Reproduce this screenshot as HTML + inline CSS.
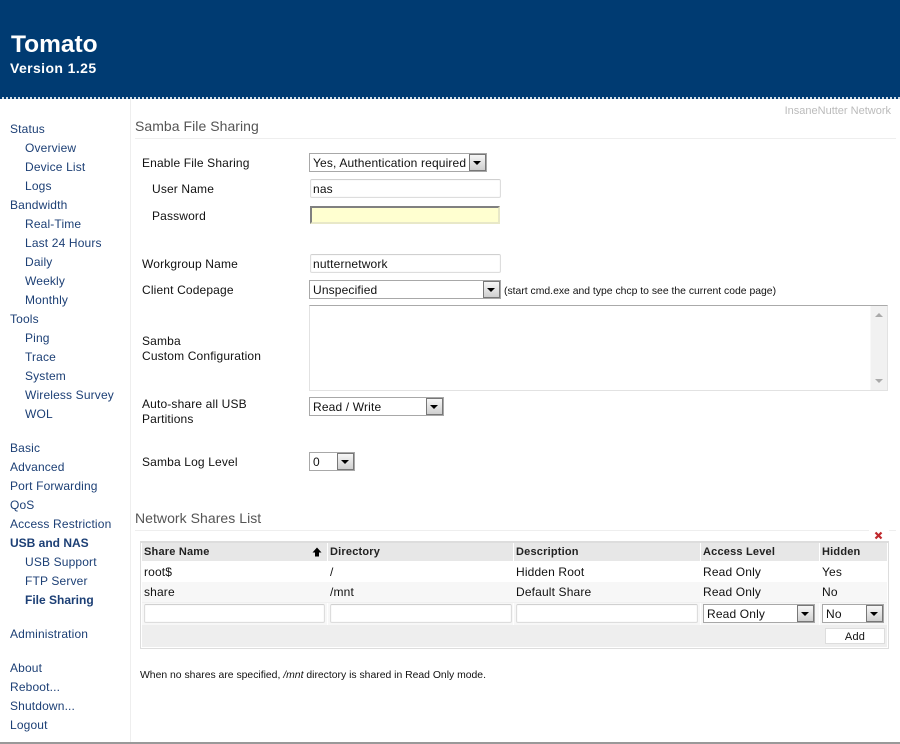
<!DOCTYPE html>
<html><head><meta charset="utf-8"><title>Tomato</title>
<style>
html,body{margin:0;padding:0;background:#fff;width:900px;height:744px;overflow:hidden}
body{position:relative;font-family:"Liberation Sans",Arial,sans-serif;font-size:12px;letter-spacing:.15px;color:#111}
.a{position:absolute;white-space:nowrap;letter-spacing:0}
.t{position:absolute;white-space:nowrap;line-height:16px;height:16px;margin-top:1px}
#hd{position:absolute;left:0;top:0;width:900px;height:97px;background:#003b72}
#dots{position:absolute;left:0;top:97px;width:900px;height:2px;background:repeating-linear-gradient(90deg,#003b72 0,#003b72 2px,#d5dfe8 2px,#d5dfe8 4px)}
.n{position:absolute;white-space:nowrap;line-height:16px;height:16px;color:#1c3f75;left:10px;margin-top:1px}
.s{left:25px}
.h{position:absolute;left:135px;width:761px;height:1px;background:#eee}
.ht{position:absolute;left:135px;font-size:14px;line-height:18px;color:#555;white-space:nowrap;letter-spacing:.05px}
.i{position:absolute;box-sizing:border-box;background:#fff;border:1px solid #ddd;border-top-color:#d0d0d0;border-radius:2px;line-height:16px;padding:1px 0 0 2px;color:#111;box-shadow:inset 0 0 0 1px #fafafa}
.sel{position:absolute;box-sizing:border-box;background:#fff;border:1px solid #a8a8a8;line-height:16px;padding:1px 0 0 3px;color:#111}
.sel b{position:absolute;right:0;top:0;bottom:0;width:17px;box-sizing:border-box;border:1px solid #777;background:linear-gradient(#f6f6f6,#cfcfcf)}
.sel b:after{content:"";position:absolute;left:3px;top:6px;border:4px solid transparent;border-top:4px solid #000;border-bottom:0}
.c{position:absolute;white-space:nowrap;line-height:16px;height:16px}
.hc{position:absolute;top:543px;height:18px;background:#e7e7e7;font-weight:bold;line-height:19px;font-size:11px;letter-spacing:.2px;padding-left:2px;box-sizing:border-box;color:#222}
</style></head><body>
<div id="hd"></div><div id="dots"></div>
<div class="a" style="left:11px;top:31px;font-size:24.5px;font-weight:bold;line-height:28px;color:#fff">Tomato</div>
<div class="a" style="left:10px;top:60px;font-size:14px;font-weight:bold;line-height:16px;letter-spacing:.4px;color:#fff">Version 1.25</div>
<div class="a" style="left:130px;top:99px;width:1px;height:643px;background:#eee"></div>
<div class="a" style="left:0;top:742px;width:900px;height:2px;background:#999"></div>

<div class="n" style="top:120px">Status</div>
<div class="n s" style="top:139px">Overview</div>
<div class="n s" style="top:158px">Device List</div>
<div class="n s" style="top:177px">Logs</div>
<div class="n" style="top:196px">Bandwidth</div>
<div class="n s" style="top:215px">Real-Time</div>
<div class="n s" style="top:234px">Last 24 Hours</div>
<div class="n s" style="top:253px">Daily</div>
<div class="n s" style="top:272px">Weekly</div>
<div class="n s" style="top:291px">Monthly</div>
<div class="n" style="top:310px">Tools</div>
<div class="n s" style="top:329px">Ping</div>
<div class="n s" style="top:348px">Trace</div>
<div class="n s" style="top:367px">System</div>
<div class="n s" style="top:386px">Wireless Survey</div>
<div class="n s" style="top:405px">WOL</div>
<div class="n" style="top:439px">Basic</div>
<div class="n" style="top:458px">Advanced</div>
<div class="n" style="top:477px">Port Forwarding</div>
<div class="n" style="top:496px">QoS</div>
<div class="n" style="top:515px">Access Restriction</div>
<div class="n" style="top:534px;font-weight:bold;letter-spacing:0">USB and NAS</div>
<div class="n s" style="top:553px">USB Support</div>
<div class="n s" style="top:572px">FTP Server</div>
<div class="n s" style="top:591px;font-weight:bold;letter-spacing:0">File Sharing</div>
<div class="n" style="top:625px">Administration</div>
<div class="n" style="top:659px">About</div>
<div class="n" style="top:678px">Reboot...</div>
<div class="n" style="top:697px">Shutdown...</div>
<div class="n" style="top:716px">Logout</div>

<div class="a" style="right:9px;top:104px;font-size:11px;line-height:14px;color:#bbb">InsaneNutter Network</div>

<div class="ht" style="top:117px">Samba File Sharing</div>
<div class="h" style="top:138px"></div>

<div class="t" style="left:142px;top:154px">Enable File Sharing</div>
<div class="t" style="left:152px;top:180px">User Name</div>
<div class="t" style="left:152px;top:207px">Password</div>
<div class="t" style="left:142px;top:255px">Workgroup Name</div>
<div class="t" style="left:142px;top:281px">Client Codepage</div>
<div class="t" style="left:142px;top:332px">Samba</div>
<div class="t" style="left:142px;top:347px">Custom Configuration</div>
<div class="t" style="left:142px;top:395px">Auto-share all USB</div>
<div class="t" style="left:142px;top:410px">Partitions</div>
<div class="t" style="left:142px;top:453px">Samba Log Level</div>

<div class="sel" style="left:309px;top:153px;width:178px;height:19px">Yes, Authentication required<b></b></div>
<div class="i" style="left:310px;top:179px;width:191px;height:19px">nas</div>
<div class="a" style="left:310px;top:206px;width:190px;height:18px;box-sizing:border-box;background:#ffffd0;border:2px solid #e8e8c8;border-top-color:#808080;border-left-color:#808080"></div>
<div class="i" style="left:310px;top:254px;width:191px;height:19px">nutternetwork</div>
<div class="sel" style="left:309px;top:280px;width:192px;height:19px">Unspecified<b></b></div>
<div class="a" style="left:504px;top:285px;font-size:10.4px;line-height:13px;color:#111">(start cmd.exe and type chcp to see the current code page)</div>

<div class="a" style="left:309px;top:305px;width:579px;height:86px;box-sizing:border-box;background:#fff;border:1px solid #e2e2e2;border-top:1px solid #aaa">
  <div class="a" style="right:0;top:0;bottom:0;width:16px;background:#f1f1f1;border-left:1px solid #f8f8f8"></div>
  <div class="a" style="right:4px;top:7px;border:4px solid transparent;border-bottom:4px solid #aaa;border-top:0"></div>
  <div class="a" style="right:4px;bottom:7px;border:4px solid transparent;border-top:4px solid #aaa;border-bottom:0"></div>
</div>

<div class="sel" style="left:309px;top:397px;width:135px;height:19px">Read / Write<b></b></div>
<div class="sel" style="left:309px;top:452px;width:46px;height:19px">0<b></b></div>

<div class="ht" style="top:509px">Network Shares List</div>
<div class="h" style="top:530px"></div>

<div class="a" style="left:140px;top:541px;width:749px;height:108px;box-sizing:border-box;border:1px solid #ddd;border-top-width:2px;background:#fff"></div>
<div class="a" style="left:869px;top:529px;width:20px;height:12px;background:#fff"></div>
<svg class="a" style="left:874px;top:531px" width="9" height="9" viewBox="0 0 9 9"><path d="M1.5 1.5L7.5 7.5M7.5 1.5L1.5 7.5" stroke="#c0282d" stroke-width="2.2" fill="none"/></svg>

<div class="hc" style="left:142px;width:185px">Share Name</div>
<svg class="a" style="left:312px;top:547px" width="10" height="10" viewBox="0 0 10 10"><path d="M5 0.5L9.5 5.5H7V9.5H3V5.5H0.5Z" fill="#000"/></svg>
<div class="hc" style="left:328px;width:185px">Directory</div>
<div class="hc" style="left:514px;width:186px">Description</div>
<div class="hc" style="left:701px;width:118px">Access Level</div>
<div class="hc" style="left:820px;width:67px">Hidden</div>

<div class="a" style="left:142px;top:582px;width:745px;height:20px;background:#f7f7f7"></div>
<div class="a" style="left:142px;top:602px;width:745px;height:1px;background:#f0f0f0"></div>
<div class="a" style="left:142px;top:603px;width:745px;height:22px;background:#f7f7f7"></div>
<div class="a" style="left:142px;top:625px;width:745px;height:22px;background:#eee"></div>
<div class="a" style="left:327px;top:603px;width:1px;height:22px;background:#fff"></div>
<div class="a" style="left:513px;top:603px;width:1px;height:22px;background:#fff"></div>
<div class="a" style="left:700px;top:603px;width:1px;height:22px;background:#fff"></div>
<div class="a" style="left:819px;top:603px;width:1px;height:22px;background:#fff"></div>

<div class="c" style="left:144px;top:564px">root$</div>
<div class="c" style="left:330px;top:564px">/</div>
<div class="c" style="left:516px;top:564px">Hidden Root</div>
<div class="c" style="left:703px;top:564px">Read Only</div>
<div class="c" style="left:822px;top:564px">Yes</div>
<div class="c" style="left:144px;top:584px">share</div>
<div class="c" style="left:330px;top:584px">/mnt</div>
<div class="c" style="left:516px;top:584px">Default Share</div>
<div class="c" style="left:703px;top:584px">Read Only</div>
<div class="c" style="left:822px;top:584px">No</div>

<div class="i" style="left:144px;top:604px;width:181px;height:19px"></div>
<div class="i" style="left:330px;top:604px;width:182px;height:19px"></div>
<div class="i" style="left:516px;top:604px;width:182px;height:19px"></div>
<div class="sel" style="left:703px;top:604px;width:112px;height:19px">Read Only<b></b></div>
<div class="sel" style="left:822px;top:604px;width:62px;height:19px">No<b></b></div>
<div class="a" style="left:825px;top:628px;width:60px;height:16px;box-sizing:border-box;background:#fff;border:1px solid #ddd;text-align:center;font-size:11px;line-height:16px;letter-spacing:.2px;color:#111">Add</div>

<div class="a" style="left:140px;top:669px;font-size:10.4px;line-height:13px;color:#111">When no shares are specified, <i>/mnt</i> directory is shared in Read Only mode.</div>
</body></html>
